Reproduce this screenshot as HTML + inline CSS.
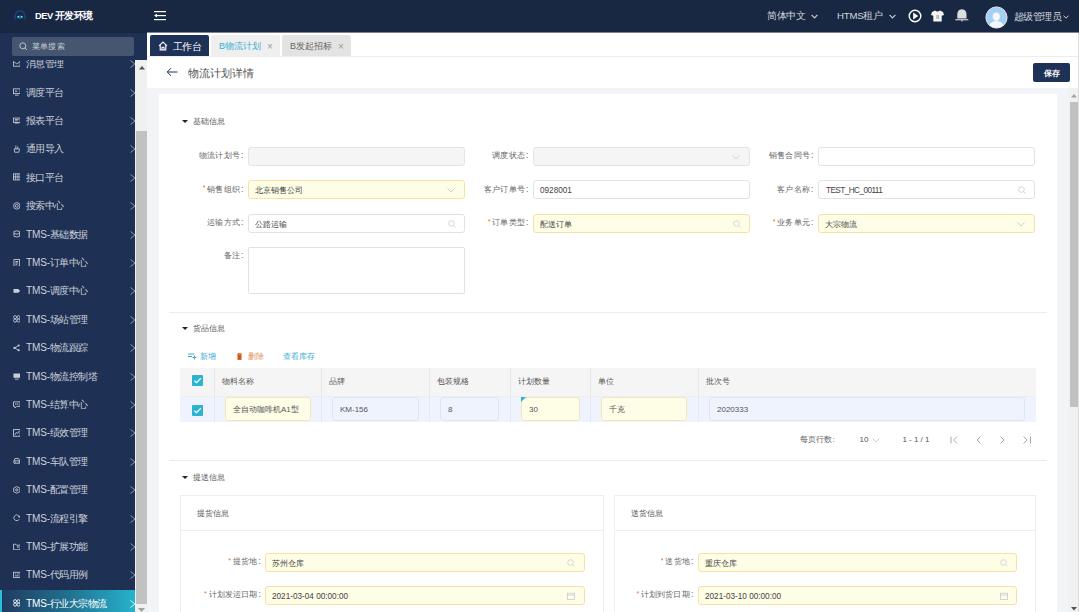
<!DOCTYPE html>
<html><head><meta charset="utf-8">
<style>
*{margin:0;padding:0;box-sizing:border-box}
html,body{width:1079px;height:612px;overflow:hidden;background:#f3f4f7;font-family:"Liberation Sans",sans-serif;}
.a{position:absolute}
#top{left:0;top:0;width:1079px;height:32px;background:#182742}
#side{left:0;top:32px;width:147px;height:580px;background:#1e3054;overflow:hidden}
.srch{left:12px;top:5px;width:122px;height:19px;background:#465670;border-radius:2px}
.mi{left:0;width:135px;height:28px;color:#ccd1da;font-size:10px;letter-spacing:-0.55px;line-height:28px}
.mi .t{position:absolute;left:26px;top:0;white-space:nowrap}
.mi .chev{position:absolute;left:130px;top:10px;width:6px;height:8px}
.mi .ic{position:absolute;left:12.8px;top:9.6px;width:7.6px;height:7.8px}
.sbt{left:135px;top:28px;width:12px;height:552px;background:#f0f0f0}
.sbth{left:136px;top:99px;width:11px;height:473px;background:#c1c1c1}
#tabs{left:147px;top:32px;width:932px;height:24px;background:#fff}
.tab{top:3px;height:21px;font-size:9px;line-height:23px;border-radius:2px 2px 0 0;white-space:nowrap}
#ph{left:147px;top:56px;width:932px;height:32px;background:#fff;border-top:1px solid #ececec}
#card{left:159px;top:94px;width:898px;height:530px;background:#fff}
.sec{font-size:8px;color:#555;white-space:nowrap}
.tri{width:0;height:0;border-left:3px solid transparent;border-right:3px solid transparent;border-top:3px solid #222}
.lbl{font-size:8.4px;letter-spacing:0.05px;color:#666;text-align:right;white-space:nowrap;line-height:18px;height:18px}
.req{color:#e2762f;font-size:7px;margin-right:2px;position:relative;top:-1.5px}
.col{margin-left:1.5px}
.inp{height:18px;border:1px solid #e1e2e6;border-radius:3px;background:#fff;font-size:8.2px;color:#444;line-height:19px;padding-left:6px;white-space:nowrap}
.dis{background:#f5f5f5;border-color:#e4e4e6}
.yel{background:#fefee7;border-color:#f9e0a2}
.div{height:1px;background:#ececec}
.th{font-size:8px;color:#555;white-space:nowrap}
.cell{height:24px;border-radius:3px;font-size:8px;color:#555;line-height:23.5px;padding-left:7px;white-space:nowrap}
.cb{width:11px;height:11px;background:#2bb3d2;border-radius:1px}
.pg{font-size:8px;color:#666;white-space:nowrap}
</style></head><body>
<div id="top" class="a">
  <svg class="a" style="left:13.5px;top:9.5px" width="12" height="10" viewBox="0 0 12 10"><path d="M1.3 9.2 L1.3 5.8 Q1.3 1 6 1 Q10.7 1 10.7 5.8 L10.7 9.2" fill="none" stroke="#1c3d80" stroke-width="1.6"/><path d="M2.8 6.8 Q6 4.2 9.2 6.8 L8.6 8.6 L3.4 8.6Z" fill="#136f90"/><circle cx="4.3" cy="6.8" r="0.8" fill="#9fe6f5"/><circle cx="7.7" cy="6.8" r="0.8" fill="#9fe6f5"/></svg>
  <div class="a" style="left:35px;top:8.5px;font-size:9.3px;color:#fff;font-weight:bold;line-height:13px;white-space:nowrap"><span style="letter-spacing:-0.5px">DEV</span> <span style="font-size:10px;letter-spacing:-0.85px">开发环境</span></div>
  <svg class="a" style="left:154px;top:10px" width="13" height="11" viewBox="0 0 13 11"><rect x="0" y="1" width="12" height="1.2" fill="#fff"/><rect x="3" y="5" width="9" height="1.2" fill="#fff"/><rect x="0" y="9" width="12" height="1.2" fill="#fff"/><path d="M0 5.6 L3 3.8 L3 7.4Z" fill="#fff"/></svg>
  <div class="a" style="left:767px;top:9px;font-size:10px;letter-spacing:-0.5px;color:#d3d7df;line-height:14px;white-space:nowrap">简体中文</div>
  <svg class="a" style="left:811px;top:14px" width="7" height="5" viewBox="0 0 7 5"><path d="M0.6 0.8 L3.5 3.8 L6.4 0.8" fill="none" stroke="#c8ccd6" stroke-width="1.15"/></svg>
  <div class="a" style="left:837px;top:9px;font-size:9.6px;letter-spacing:-0.2px;color:#d3d7df;line-height:14px;white-space:nowrap">HTMS租户</div>
  <svg class="a" style="left:889px;top:14px" width="7" height="5" viewBox="0 0 7 5"><path d="M0.6 0.8 L3.5 3.8 L6.4 0.8" fill="none" stroke="#c8ccd6" stroke-width="1.15"/></svg>
  <svg class="a" style="left:908px;top:9px" width="14" height="14" viewBox="0 0 14 14"><circle cx="7" cy="7" r="5.8" fill="none" stroke="#fff" stroke-width="1.4"/><path d="M5.2 3.6 L10.3 7 L5.2 10.4Z" fill="#fff"/></svg>
  <svg class="a" style="left:931px;top:10px" width="13" height="12" viewBox="0 0 13 12"><path d="M4 0.5 L1 2 L0 5 L2.3 5.8 L2.3 11.5 L10.7 11.5 L10.7 5.8 L13 5 L12 2 L9 0.5 Q6.5 2.5 4 0.5Z" fill="#f4f4f4"/><rect x="5.3" y="5" width="1" height="4" fill="#e6a64a"/><rect x="6.7" y="5" width="1" height="4" fill="#4ab0e6"/></svg>
  <svg class="a" style="left:955px;top:9px" width="14" height="13" viewBox="0 0 14 13"><path d="M6.8 0.3 C3.5 0.6 2.3 3 2.3 5.5 L2.3 9.6 L11.5 9.6 L11.5 5.5 C11.5 3 10.3 0.6 6.8 0.3Z" fill="#dcdde0"/><rect x="0.3" y="10.2" width="13" height="1.1" fill="#dcdde0"/><rect x="6" y="11.3" width="1.8" height="1" fill="#dcdde0"/></svg>
  <svg class="a" style="left:985px;top:6px" width="23" height="23" viewBox="0 0 23 23"><circle cx="11.5" cy="11.5" r="10.6" fill="#a6d0f3" stroke="#dfe3e8" stroke-width="1"/><ellipse cx="11.3" cy="10.6" rx="3.6" ry="4.2" fill="#f4f8fc"/><path d="M4.5 19.5 Q6 15 11.3 15 Q16.5 15 18.5 19.5 Q11.5 24 4.5 19.5Z" fill="#f4f8fc"/></svg>
  <div class="a" style="left:1014px;top:10px;font-size:10px;letter-spacing:-0.55px;color:#d3d7df;line-height:14px;white-space:nowrap">超级管理员</div>
  <svg class="a" style="left:1063px;top:15px" width="6" height="4" viewBox="0 0 6 4"><path d="M0.5 0.6 L3 3.2 L5.5 0.6" fill="none" stroke="#c8ccd6" stroke-width="1"/></svg>
</div>

<div id="side" class="a">
  <div class="a srch">
    <svg class="a" style="left:7px;top:5px" width="9" height="9" viewBox="0 0 9 9"><circle cx="3.8" cy="3.8" r="3" fill="none" stroke="#c6ccd6" stroke-width="0.9"/><path d="M6 6 L8 8" stroke="#c6ccd6" stroke-width="0.9"/></svg>
    <div class="a" style="left:20px;top:3px;font-size:8.3px;letter-spacing:0.2px;color:#c3c9d3;line-height:13px;white-space:nowrap">菜单搜索</div>
  </div>
  <div class="a sbt"></div>
  <div class="a sbth"></div>
  <svg class="a" style="left:138.5px;top:34px" width="6" height="4" viewBox="0 0 6 4"><path d="M0 3.5 L3 0 L6 3.5Z" fill="#505050"/></svg>
  <svg class="a" style="left:138px;top:576px" width="7" height="4" viewBox="0 0 7 4"><path d="M0 0 L3.5 4 L7 0Z" fill="#a0a0a0"/></svg>
  <div class="a" style="left:0;top:28px;width:135px;height:552px;overflow:hidden">
  <div class="a mi" style="top:-9.8px"><svg class="ic" viewBox="0 0 8 8"><path d="M0.5 1.5 L0.5 6.5 L7.5 6.5 L7.5 1.5 M0.5 1.5 L4 4 L7.5 1.5" fill="none" stroke="#c9cfd9" stroke-width="0.9"/></svg><span class="t">消息管理</span><svg class="chev" viewBox="0 0 6 8"><path d="M0.5 0.5 L5 4 L0.5 7.5" fill="none" stroke="#9aa3b4" stroke-width="0.9"/></svg></div>
  <div class="a mi" style="top:18.6px"><svg class="ic" viewBox="0 0 8 8"><rect x="0.5" y="0.8" width="7" height="5" fill="none" stroke="#c9cfd9" stroke-width="0.9"/><path d="M2 7.4 L6 7.4" fill="none" stroke="#c9cfd9" stroke-width="0.9"/><path d="M2.5 2.2 L5 3.3 L2.5 4.4Z" fill="#c9cfd9"/></svg><span class="t">调度平台</span><svg class="chev" viewBox="0 0 6 8"><path d="M0.5 0.5 L5 4 L0.5 7.5" fill="none" stroke="#9aa3b4" stroke-width="0.9"/></svg></div>
  <div class="a mi" style="top:47.0px"><svg class="ic" viewBox="0 0 8 8"><rect x="0.5" y="1" width="7" height="4.6" fill="none" stroke="#c9cfd9" stroke-width="0.9"/><path d="M2 7.2 L6 7.2 M2 2.6 L6 2.6 M2 4 L5 4" fill="none" stroke="#c9cfd9" stroke-width="0.9"/></svg><span class="t">报表平台</span><svg class="chev" viewBox="0 0 6 8"><path d="M0.5 0.5 L5 4 L0.5 7.5" fill="none" stroke="#9aa3b4" stroke-width="0.9"/></svg></div>
  <div class="a mi" style="top:75.4px"><svg class="ic" viewBox="0 0 8 8"><path d="M3 0.5 L3 4 M5 1.5 L5 4 M1.2 4 L6.8 4 L6.2 7.5 L1.8 7.5Z" fill="none" stroke="#c9cfd9" stroke-width="0.9"/></svg><span class="t">通用导入</span><svg class="chev" viewBox="0 0 6 8"><path d="M0.5 0.5 L5 4 L0.5 7.5" fill="none" stroke="#9aa3b4" stroke-width="0.9"/></svg></div>
  <div class="a mi" style="top:103.8px"><svg class="ic" viewBox="0 0 8 8"><rect x="0.5" y="0.8" width="7" height="6.4" fill="none" stroke="#c9cfd9" stroke-width="0.9"/><path d="M2.8 0.8 L2.8 7.2 M5.2 0.8 L5.2 7.2 M0.5 4 L7.5 4" fill="none" stroke="#c9cfd9" stroke-width="0.9"/></svg><span class="t">接口平台</span><svg class="chev" viewBox="0 0 6 8"><path d="M0.5 0.5 L5 4 L0.5 7.5" fill="none" stroke="#9aa3b4" stroke-width="0.9"/></svg></div>
  <div class="a mi" style="top:132.2px"><svg class="ic" viewBox="0 0 8 8"><circle cx="4" cy="4" r="3.4" fill="none" stroke="#c9cfd9" stroke-width="0.9"/><circle cx="4" cy="4" r="1.5" fill="none" stroke="#c9cfd9" stroke-width="0.9"/></svg><span class="t">搜索中心</span><svg class="chev" viewBox="0 0 6 8"><path d="M0.5 0.5 L5 4 L0.5 7.5" fill="none" stroke="#9aa3b4" stroke-width="0.9"/></svg></div>
  <div class="a mi" style="top:160.6px"><svg class="ic" viewBox="0 0 8 8"><path d="M1 1.5 Q4 0 7 1.5 L7 6.5 Q4 8 1 6.5Z M1 3.5 Q4 5 7 3.5" fill="none" stroke="#c9cfd9" stroke-width="0.9"/></svg><span class="t"><span style="letter-spacing:-0.15px">TMS-</span>基础数据</span><svg class="chev" viewBox="0 0 6 8"><path d="M0.5 0.5 L5 4 L0.5 7.5" fill="none" stroke="#9aa3b4" stroke-width="0.9"/></svg></div>
  <div class="a mi" style="top:189.0px"><svg class="ic" viewBox="0 0 8 8"><rect x="1" y="0.5" width="6" height="7" fill="none" stroke="#c9cfd9" stroke-width="0.9"/><path d="M2.5 2.5 L5.5 2.5 M2.5 4 L5.5 4 M2.5 5.5 L4.5 5.5" fill="none" stroke="#c9cfd9" stroke-width="0.9"/></svg><span class="t"><span style="letter-spacing:-0.15px">TMS-</span>订单中心</span><svg class="chev" viewBox="0 0 6 8"><path d="M0.5 0.5 L5 4 L0.5 7.5" fill="none" stroke="#9aa3b4" stroke-width="0.9"/></svg></div>
  <div class="a mi" style="top:217.4px"><svg class="ic" viewBox="0 0 8 8"><path d="M0.5 2 L5.5 2 L7.5 4 L5.5 6 L0.5 6Z" fill="#c9cfd9"/></svg><span class="t"><span style="letter-spacing:-0.15px">TMS-</span>调度中心</span><svg class="chev" viewBox="0 0 6 8"><path d="M0.5 0.5 L5 4 L0.5 7.5" fill="none" stroke="#9aa3b4" stroke-width="0.9"/></svg></div>
  <div class="a mi" style="top:245.8px"><svg class="ic" viewBox="0 0 8 8"><circle cx="2.2" cy="2.2" r="1.6" fill="none" stroke="#c9cfd9" stroke-width="0.9"/><circle cx="5.8" cy="2.2" r="1.6" fill="none" stroke="#c9cfd9" stroke-width="0.9"/><circle cx="2.2" cy="5.8" r="1.6" fill="none" stroke="#c9cfd9" stroke-width="0.9"/><circle cx="5.8" cy="5.8" r="1.6" fill="none" stroke="#c9cfd9" stroke-width="0.9"/></svg><span class="t"><span style="letter-spacing:-0.15px">TMS-</span>场站管理</span><svg class="chev" viewBox="0 0 6 8"><path d="M0.5 0.5 L5 4 L0.5 7.5" fill="none" stroke="#9aa3b4" stroke-width="0.9"/></svg></div>
  <div class="a mi" style="top:274.2px"><svg class="ic" viewBox="0 0 8 8"><circle cx="1.5" cy="4" r="1.1" fill="#c9cfd9"/><circle cx="6" cy="1.5" r="1.1" fill="#c9cfd9"/><circle cx="6" cy="6.5" r="1.1" fill="#c9cfd9"/><path d="M1.5 4 L6 1.5 M1.5 4 L6 6.5" fill="none" stroke="#c9cfd9" stroke-width="0.9"/></svg><span class="t"><span style="letter-spacing:-0.15px">TMS-</span>物流跟踪</span><svg class="chev" viewBox="0 0 6 8"><path d="M0.5 0.5 L5 4 L0.5 7.5" fill="none" stroke="#9aa3b4" stroke-width="0.9"/></svg></div>
  <div class="a mi" style="top:302.6px"><svg class="ic" viewBox="0 0 8 8"><rect x="0.5" y="1.5" width="7" height="4.5" fill="#c9cfd9"/><path d="M2 7.4 L6 7.4" fill="none" stroke="#c9cfd9" stroke-width="0.9"/></svg><span class="t"><span style="letter-spacing:-0.15px">TMS-</span>物流控制塔</span><svg class="chev" viewBox="0 0 6 8"><path d="M0.5 0.5 L5 4 L0.5 7.5" fill="none" stroke="#9aa3b4" stroke-width="0.9"/></svg></div>
  <div class="a mi" style="top:331.0px"><svg class="ic" viewBox="0 0 8 8"><path d="M0.5 0.8 L7.5 0.8 L7.5 5.5 L4 5.5 L2 7.5 L2 5.5 L0.5 5.5Z" fill="none" stroke="#c9cfd9" stroke-width="0.9"/><path d="M3 2.2 L3 4 M5 2.2 L5 4" fill="none" stroke="#c9cfd9" stroke-width="0.9"/></svg><span class="t"><span style="letter-spacing:-0.15px">TMS-</span>结算中心</span><svg class="chev" viewBox="0 0 6 8"><path d="M0.5 0.5 L5 4 L0.5 7.5" fill="none" stroke="#9aa3b4" stroke-width="0.9"/></svg></div>
  <div class="a mi" style="top:359.4px"><svg class="ic" viewBox="0 0 8 8"><rect x="0.5" y="0.5" width="7" height="7" fill="none" stroke="#c9cfd9" stroke-width="0.9"/><path d="M2 6 L3.5 3.5 L5 4.5 L6.5 2" fill="none" stroke="#c9cfd9" stroke-width="0.9"/></svg><span class="t"><span style="letter-spacing:-0.15px">TMS-</span>绩效管理</span><svg class="chev" viewBox="0 0 6 8"><path d="M0.5 0.5 L5 4 L0.5 7.5" fill="none" stroke="#9aa3b4" stroke-width="0.9"/></svg></div>
  <div class="a mi" style="top:387.8px"><svg class="ic" viewBox="0 0 8 8"><path d="M1 4 L2 1.5 L6 1.5 L7 4 L7 6.5 L1 6.5Z M1 4 L7 4" fill="none" stroke="#c9cfd9" stroke-width="0.9"/><circle cx="2.5" cy="5.2" r="0.6" fill="#c9cfd9"/><circle cx="5.5" cy="5.2" r="0.6" fill="#c9cfd9"/></svg><span class="t"><span style="letter-spacing:-0.15px">TMS-</span>车队管理</span><svg class="chev" viewBox="0 0 6 8"><path d="M0.5 0.5 L5 4 L0.5 7.5" fill="none" stroke="#9aa3b4" stroke-width="0.9"/></svg></div>
  <div class="a mi" style="top:416.2px"><svg class="ic" viewBox="0 0 8 8"><path d="M4 0.5 L7.3 2.2 L7.3 5.8 L4 7.5 L0.7 5.8 L0.7 2.2Z" fill="none" stroke="#c9cfd9" stroke-width="0.9"/><circle cx="4" cy="4" r="1.2" fill="none" stroke="#c9cfd9" stroke-width="0.9"/></svg><span class="t"><span style="letter-spacing:-0.15px">TMS-</span>配置管理</span><svg class="chev" viewBox="0 0 6 8"><path d="M0.5 0.5 L5 4 L0.5 7.5" fill="none" stroke="#9aa3b4" stroke-width="0.9"/></svg></div>
  <div class="a mi" style="top:444.6px"><svg class="ic" viewBox="0 0 8 8"><path d="M6.8 3 A3 3 0 1 0 6.5 5.5" fill="none" stroke="#c9cfd9" stroke-width="0.9"/><path d="M5.5 2.8 L7.2 3.4 L7.4 1.6" fill="none" stroke="#c9cfd9" stroke-width="0.9"/></svg><span class="t"><span style="letter-spacing:-0.15px">TMS-</span>流程引擎</span><svg class="chev" viewBox="0 0 6 8"><path d="M0.5 0.5 L5 4 L0.5 7.5" fill="none" stroke="#9aa3b4" stroke-width="0.9"/></svg></div>
  <div class="a mi" style="top:473.0px"><svg class="ic" viewBox="0 0 8 8"><path d="M0.5 1.2 L3 1.2 L3.8 2.2 L7.5 2.2 L7.5 7 L0.5 7Z" fill="none" stroke="#c9cfd9" stroke-width="0.9"/><path d="M4.5 4 L6 4 M5.2 3.3 L5.2 4.8" fill="none" stroke="#c9cfd9" stroke-width="0.9"/></svg><span class="t"><span style="letter-spacing:-0.15px">TMS-</span>扩展功能</span><svg class="chev" viewBox="0 0 6 8"><path d="M0.5 0.5 L5 4 L0.5 7.5" fill="none" stroke="#9aa3b4" stroke-width="0.9"/></svg></div>
  <div class="a mi" style="top:501.4px"><svg class="ic" viewBox="0 0 8 8"><rect x="0.5" y="1.2" width="7" height="5.6" fill="none" stroke="#c9cfd9" stroke-width="0.9"/><path d="M2 3 L3 3 M4 3 L6 3 M2 5 L6 5" fill="none" stroke="#c9cfd9" stroke-width="0.9"/></svg><span class="t"><span style="letter-spacing:-0.15px">TMS-</span>代码用例</span><svg class="chev" viewBox="0 0 6 8"><path d="M0.5 0.5 L5 4 L0.5 7.5" fill="none" stroke="#9aa3b4" stroke-width="0.9"/></svg></div>
  <div class="a mi" style="top:529.8px;background:linear-gradient(90deg,#1f3a60 0%,#21708f 50%,#26b3cc 100%);box-shadow:inset 2px 0 0 #2bc0d8;color:#fff"><svg class="ic" viewBox="0 0 8 8"><circle cx="2.2" cy="2.2" r="1.6" fill="none" stroke="#ffffff" stroke-width="0.9"/><circle cx="5.8" cy="2.2" r="1.6" fill="none" stroke="#ffffff" stroke-width="0.9"/><circle cx="2.2" cy="5.8" r="1.6" fill="none" stroke="#ffffff" stroke-width="0.9"/><circle cx="5.8" cy="5.8" r="1.6" fill="none" stroke="#ffffff" stroke-width="0.9"/></svg><span class="t"><span style="letter-spacing:-0.15px">TMS-</span>行业大宗物流</span><svg class="chev" viewBox="0 0 6 8"><path d="M0.5 0.5 L5 4 L0.5 7.5" fill="none" stroke="#e6f4f8" stroke-width="0.9"/></svg></div>
  </div>
</div>

<div id="tabs" class="a">
  <div class="a tab" style="left:3px;width:59px;background:#1e3157;color:#fff;font-size:9.5px">
    <svg class="a" style="left:8px;top:6px" width="10" height="10" viewBox="0 0 10 10"><path d="M1 4.8 L5 1 L9 4.8 M2.2 3.8 L2.2 9 L7.8 9 L7.8 3.8 M4 9 L4 6.3 L6 6.3 L6 9" fill="none" stroke="#fff" stroke-width="1.1"/></svg>
    <span class="a" style="left:22.5px;top:0;letter-spacing:-0.33px">工作台</span>
  </div>
  <div class="a tab" style="left:64px;width:69px;background:#efefef;color:#37aed6"><span class="a" style="left:8px">B物流计划</span><span class="a" style="left:56px;color:#999;font-size:10px">×</span></div>
  <div class="a tab" style="left:135px;width:69px;background:#e3e3e3;color:#666"><span class="a" style="left:8px">B发起招标</span><span class="a" style="left:56px;color:#999;font-size:10px">×</span></div>
</div>

<div id="ph" class="a">
  <svg class="a" style="left:18.5px;top:10px" width="12" height="10" viewBox="0 0 12 10"><path d="M11.5 5 L1.2 5 M5 1.2 L1.2 5 L5 8.8" fill="none" stroke="#1e3157" stroke-width="1"/></svg>
  <div class="a" style="left:41px;top:9px;font-size:11px;color:#555;line-height:14px;white-space:nowrap">物流计划详情</div>
  <div class="a" style="left:886px;top:6px;width:37px;height:19px;background:#1e3157;border-radius:2px;color:#fff;font-size:8.4px;font-weight:bold;line-height:21px;text-align:center">保存</div>
</div>

<div class="a" style="left:1068px;top:88px;width:10px;height:524px;background:#f1f1f1"></div>
<div class="a" style="left:1070px;top:102px;width:8px;height:305px;background:#c1c1c1"></div>
<div class="a" style="left:1078px;top:32px;width:1px;height:580px;background:#dedede"></div>
<svg class="a" style="left:1071px;top:94px" width="6" height="4" viewBox="0 0 6 4"><path d="M0 3.5 L3 0 L6 3.5Z" fill="#a3a3a3"/></svg>
<svg class="a" style="left:1071px;top:607px" width="6" height="4" viewBox="0 0 6 4"><path d="M0 0 L3 3.5 L6 0Z" fill="#505050"/></svg>

<div id="card" class="a"></div>
<div class="a tri" style="left:182px;top:119.8px"></div>
<div class="a sec" style="left:192.5px;top:115.8px;line-height:11px">基础信息</div>
<div class="a tri" style="left:182px;top:327.0px"></div>
<div class="a sec" style="left:192.5px;top:323.0px;line-height:11px">货品信息</div>
<div class="a tri" style="left:182px;top:476.0px"></div>
<div class="a sec" style="left:192.5px;top:472.0px;line-height:11px">提送信息</div>
<div class="a div" style="left:169px;top:312px;width:878px"></div>
<div class="a div" style="left:169px;top:460px;width:878px"></div>
<div class="a lbl" style="right:835.5px;top:146.4px">物流计划号<span class="col">:</span></div>
<div class="a inp dis" style="left:248px;top:147px;width:217px;height:18.5px"></div>
<div class="a lbl" style="right:550.5px;top:146.4px">调度状态<span class="col">:</span></div>
<div class="a inp dis" style="left:533px;top:147px;width:217px;height:18.5px"></div>
<svg class="a" style="left:731.5px;top:154.5px" width="8" height="5" viewBox="0 0 8 5"><path d="M0.5 0.5 L4 4 L7.5 0.5" fill="none" stroke="#c0c4cc" stroke-width="0.8"/></svg>
<div class="a lbl" style="right:265.5px;top:146.4px">销售合同号<span class="col">:</span></div>
<div class="a inp " style="left:818px;top:147px;width:217px;height:18.5px"></div>
<div class="a lbl" style="right:835.5px;top:179.6px"><span class="req">*</span>销售组织<span class="col">:</span></div>
<div class="a inp yel" style="left:248px;top:180.2px;width:217px;height:18.5px">北京销售公司</div>
<svg class="a" style="left:446.5px;top:187.7px" width="8" height="5" viewBox="0 0 8 5"><path d="M0.5 0.5 L4 4 L7.5 0.5" fill="none" stroke="#c0c4cc" stroke-width="0.8"/></svg>
<div class="a lbl" style="right:550.5px;top:179.6px">客户订单号<span class="col">:</span></div>
<div class="a inp " style="left:533px;top:180.2px;width:217px;height:18.5px">0928001</div>
<div class="a lbl" style="right:265.5px;top:179.6px">客户名称<span class="col">:</span></div>
<div class="a inp " style="left:818px;top:180.2px;width:217px;height:18.5px"><span style="letter-spacing:-0.55px;padding-left:1px">TEST_HC_00111</span></div>
<svg class="a" style="left:1017.5px;top:185.7px" width="8" height="8" viewBox="0 0 8 8"><circle cx="3.5" cy="3.5" r="2.8" fill="none" stroke="#c8cbd2" stroke-width="0.8"/><path d="M5.5 5.5 L7.5 7.5" stroke="#c8cbd2" stroke-width="0.8"/></svg>
<div class="a lbl" style="right:835.5px;top:213.4px">运输方式<span class="col">:</span></div>
<div class="a inp " style="left:248px;top:214px;width:217px;height:18.5px">公路运输</div>
<svg class="a" style="left:447.5px;top:219.5px" width="8" height="8" viewBox="0 0 8 8"><circle cx="3.5" cy="3.5" r="2.8" fill="none" stroke="#c8cbd2" stroke-width="0.8"/><path d="M5.5 5.5 L7.5 7.5" stroke="#c8cbd2" stroke-width="0.8"/></svg>
<div class="a lbl" style="right:550.5px;top:213.4px"><span class="req">*</span>订单类型<span class="col">:</span></div>
<div class="a inp yel" style="left:533px;top:214px;width:217px;height:18.5px">配送订单</div>
<svg class="a" style="left:732.5px;top:219.5px" width="8" height="8" viewBox="0 0 8 8"><circle cx="3.5" cy="3.5" r="2.8" fill="none" stroke="#c8cbd2" stroke-width="0.8"/><path d="M5.5 5.5 L7.5 7.5" stroke="#c8cbd2" stroke-width="0.8"/></svg>
<div class="a lbl" style="right:265.5px;top:213.4px"><span class="req">*</span>业务单元<span class="col">:</span></div>
<div class="a inp yel" style="left:818px;top:214px;width:217px;height:18.5px">大宗物流</div>
<svg class="a" style="left:1016.5px;top:221.5px" width="8" height="5" viewBox="0 0 8 5"><path d="M0.5 0.5 L4 4 L7.5 0.5" fill="none" stroke="#c0c4cc" stroke-width="0.8"/></svg>
<div class="a lbl" style="right:835.5px;top:246.4px">备注<span class="col">:</span></div>
<div class="a inp " style="left:248px;top:247px;width:217px;height:47px;border-radius:1.5px"></div>
<svg class="a" style="left:187.5px;top:353px" width="9" height="7" viewBox="0 0 9 7"><path d="M0 1 L6 1 M0 3.5 L4 3.5 M6.5 2.5 L6.5 6.5 M4.5 4.5 L8.5 4.5" stroke="#3aaad6" stroke-width="1"/></svg>
<div class="a" style="left:199.5px;top:351px;font-size:8px;color:#3aaad6;line-height:11px;white-space:nowrap">新增</div>
<svg class="a" style="left:237px;top:353px" width="5" height="7" viewBox="0 0 5 7"><rect x="1" y="0" width="3" height="0.8" fill="#d4541a"/><rect x="0" y="0.8" width="5" height="0.9" fill="#d4541a"/><rect x="0.5" y="1.9" width="4" height="5" fill="#d4541a"/></svg>
<div class="a" style="left:247.7px;top:351px;font-size:8px;color:#e0925a;line-height:11px;white-space:nowrap">删除</div>
<div class="a" style="left:283px;top:351px;font-size:8px;color:#3aaad6;line-height:11px;white-space:nowrap">查看库存</div>
<div class="a" style="left:180px;top:368px;width:856px;height:28px;background:#f5f5f5"></div>
<div class="a" style="left:180px;top:396px;width:856px;height:26px;background:#eff3fe"></div>
<div class="a" style="left:214px;top:368px;width:1px;height:54px;background:#e6e8ec"></div>
<div class="a" style="left:321px;top:368px;width:1px;height:54px;background:#e6e8ec"></div>
<div class="a" style="left:429px;top:368px;width:1px;height:54px;background:#e6e8ec"></div>
<div class="a" style="left:510px;top:368px;width:1px;height:54px;background:#e6e8ec"></div>
<div class="a" style="left:590px;top:368px;width:1px;height:54px;background:#e6e8ec"></div>
<div class="a" style="left:698px;top:368px;width:1px;height:54px;background:#e6e8ec"></div>
<div class="a" style="left:180px;top:395.5px;width:856px;height:1px;background:#eceef2"></div>
<div class="a cb" style="left:192px;top:375px"><svg width="11" height="11" viewBox="0 0 11 11" style="display:block"><path d="M2.3 5.6 L4.5 7.7 L8.8 3.3" fill="none" stroke="#fff" stroke-width="1.3"/></svg></div>
<div class="a cb" style="left:192px;top:405px"><svg width="11" height="11" viewBox="0 0 11 11" style="display:block"><path d="M2.3 5.6 L4.5 7.7 L8.8 3.3" fill="none" stroke="#fff" stroke-width="1.3"/></svg></div>
<div class="a th" style="left:221.7px;top:375.5px;line-height:11px">物料名称</div>
<div class="a th" style="left:329.4px;top:375.5px;line-height:11px">品牌</div>
<div class="a th" style="left:437px;top:375.5px;line-height:11px">包装规格</div>
<div class="a th" style="left:517.8px;top:375.5px;line-height:11px">计划数量</div>
<div class="a th" style="left:598.3px;top:375.5px;line-height:11px">单位</div>
<div class="a th" style="left:706px;top:375.5px;line-height:11px">批次号</div>
<div class="a cell" style="left:225px;top:397px;width:85.5px;background:#fefee7;border:1px solid #eee6bd">全自动咖啡机A1型</div>
<div class="a cell" style="left:332px;top:397px;width:86.5px;background:#eff3fe;border:1px solid #dfe6f3">KM-156</div>
<div class="a cell" style="left:440px;top:397px;width:58.5px;background:#eff3fe;border:1px solid #dfe6f3">8</div>
<div class="a cell" style="left:521px;top:397px;width:58.5px;background:#fefee7;border:1px solid #eee6bd">30</div>
<div class="a cell" style="left:601px;top:397px;width:86px;background:#fefee7;border:1px solid #eee6bd">千克</div>
<div class="a cell" style="left:709px;top:397px;width:315.5px;background:#eff3fe;border:1px solid #dfe6f3">2020333</div>
<svg class="a" style="left:521px;top:397px" width="5" height="5" viewBox="0 0 5 5"><path d="M0 0 L5 0 L0 5Z" fill="#29b1d6"/></svg>
<div class="a pg" style="left:800.4px;top:434px;line-height:11px">每页行数:</div>
<div class="a pg" style="left:859.5px;top:434px;line-height:11px;color:#555">10</div>
<svg class="a" style="left:871.5px;top:438px" width="8" height="5" viewBox="0 0 8 5"><path d="M0.5 0.5 L4 4 L7.5 0.5" fill="none" stroke="#c0c4cc" stroke-width="0.8"/></svg>
<div class="a pg" style="left:902.4px;top:434px;line-height:11px;color:#555">1 - 1 / 1</div>
<svg class="a" style="left:949.5px;top:435.5px" width="9" height="8" viewBox="0 0 9 8"><path d="M1 0.5 L1 7.5 M7 0.5 L3.5 4 L7 7.5" fill="none" stroke="#999" stroke-width="0.85"/></svg>
<svg class="a" style="left:975.5px;top:435.5px" width="9" height="8" viewBox="0 0 9 8"><path d="M4.5 0.5 L1 4 L4.5 7.5" fill="none" stroke="#999" stroke-width="0.85"/></svg>
<svg class="a" style="left:999.5px;top:435.5px" width="9" height="8" viewBox="0 0 9 8"><path d="M0.5 0.5 L4 4 L0.5 7.5" fill="none" stroke="#999" stroke-width="0.85"/></svg>
<svg class="a" style="left:1022.5px;top:435.5px" width="9" height="8" viewBox="0 0 9 8"><path d="M0.5 0.5 L4 4 L0.5 7.5 M7.5 0.5 L7.5 7.5" fill="none" stroke="#999" stroke-width="0.85"/></svg>
<div class="a" style="left:180px;top:495px;width:423.5px;height:130px;border:1px solid #efefef;background:#fff"></div>
<div class="a" style="left:180px;top:530px;width:423.5px;height:1px;background:#efefef"></div>
<div class="a sec" style="left:197px;top:508px;line-height:11px;color:#555;font-size:8.3px">提货信息</div>
<div class="a" style="left:613.5px;top:495px;width:422.0px;height:130px;border:1px solid #efefef;background:#fff"></div>
<div class="a" style="left:613.5px;top:530px;width:422.0px;height:1px;background:#efefef"></div>
<div class="a sec" style="left:630.5px;top:508px;line-height:11px;color:#555;font-size:8.3px">送货信息</div>
<div class="a lbl" style="right:818px;top:552.4px"><span class="req">*</span>提货地<span class="col">:</span></div>
<div class="a inp yel" style="left:265px;top:553px;width:319.5px;height:18.5px">苏州仓库</div>
<svg class="a" style="left:567.0px;top:558.5px" width="8" height="8" viewBox="0 0 8 8"><circle cx="3.5" cy="3.5" r="2.8" fill="none" stroke="#c8cbd2" stroke-width="0.8"/><path d="M5.5 5.5 L7.5 7.5" stroke="#c8cbd2" stroke-width="0.8"/></svg>
<div class="a lbl" style="right:818px;top:585.4px"><span class="req">*</span>计划发运日期<span class="col">:</span></div>
<div class="a inp yel" style="left:265px;top:586px;width:319.5px;height:18.5px">2021-03-04 00:00:00</div>
<svg class="a" style="left:567.0px;top:591.5px" width="8" height="8" viewBox="0 0 8 8"><rect x="0.5" y="1.2" width="7" height="6.3" fill="none" stroke="#c8cbd2" stroke-width="0.8"/><path d="M0.5 3 L7.5 3" stroke="#c8cbd2" stroke-width="0.8"/></svg>
<div class="a lbl" style="right:385.5px;top:552.4px"><span class="req">*</span>送货地<span class="col">:</span></div>
<div class="a inp yel" style="left:698px;top:553px;width:319px;height:18.5px">重庆仓库</div>
<svg class="a" style="left:999.5px;top:558.5px" width="8" height="8" viewBox="0 0 8 8"><circle cx="3.5" cy="3.5" r="2.8" fill="none" stroke="#c8cbd2" stroke-width="0.8"/><path d="M5.5 5.5 L7.5 7.5" stroke="#c8cbd2" stroke-width="0.8"/></svg>
<div class="a lbl" style="right:385.5px;top:585.4px"><span class="req">*</span>计划到货日期<span class="col">:</span></div>
<div class="a inp yel" style="left:698px;top:586px;width:319px;height:18.5px">2021-03-10 00:00:00</div>
<svg class="a" style="left:999.5px;top:591.5px" width="8" height="8" viewBox="0 0 8 8"><rect x="0.5" y="1.2" width="7" height="6.3" fill="none" stroke="#c8cbd2" stroke-width="0.8"/><path d="M0.5 3 L7.5 3" stroke="#c8cbd2" stroke-width="0.8"/></svg>
<div class="a" style="left:0;top:32px;width:1079px;height:1px;background:rgba(18,30,55,0.55)"></div>
</body></html>
